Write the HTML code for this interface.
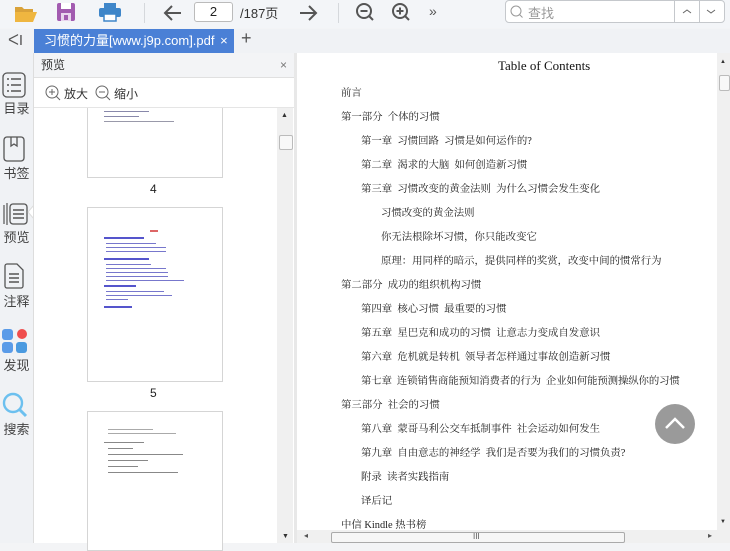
<!DOCTYPE html><html><head><meta charset="utf-8"><style>
*{margin:0;padding:0;box-sizing:border-box}
body{width:730px;height:543px;overflow:hidden;background:#f3f4f6;font-family:"Liberation Sans","Noto Sans CJK SC",sans-serif;position:relative;color:#333}
.a{position:absolute}
.toc{position:absolute;font-family:"Liberation Serif","Noto Serif CJK SC",serif;font-size:10.4px;color:#222;white-space:pre}
.side{position:absolute;left:0;width:33px;text-align:center;font-size:12px;color:#444}
</style></head><body>
<div class="a" style="left:0;top:0;width:730px;height:28px;background:#f3f5f8"></div>
<svg class="a" style="left:12px;top:3px" width="26" height="20"><path d="M3 4h7l2 2h9v3H3z" fill="#d9a23a"/><path d="M3 9h22l-4 10H3z" fill="#efb640"/></svg>
<svg class="a" style="left:56px;top:2px" width="20" height="20"><rect x="1" y="1" width="18" height="18" rx="2" fill="#a25bb0"/><rect x="5" y="1" width="10" height="6" fill="#fff"/><rect x="5" y="11" width="10" height="8" fill="#e9d5ee"/><rect x="8" y="13" width="4" height="5" fill="#a25bb0"/></svg>
<svg class="a" style="left:98px;top:2px" width="24" height="20"><rect x="6" y="1" width="12" height="5" fill="#3f86c9"/><rect x="1" y="6" width="22" height="9" rx="2" fill="#3f86c9"/><rect x="6" y="12" width="12" height="7" fill="#fff" stroke="#3f86c9" stroke-width="1.5"/></svg>
<div class="a" style="left:144px;top:3px;width:1px;height:20px;background:#d5d8dc"></div>
<svg class="a" style="left:162px;top:3px" width="22" height="20"><path d="M19 10H4M10 3L3 10l7 7" stroke="#555" stroke-width="2" fill="none"/></svg>
<div class="a" style="left:194px;top:2px;width:39px;height:20px;border:1px solid #bbb;border-radius:3px;background:#fff;font-size:13px;text-align:center;line-height:18px;color:#222">2</div>
<div class="a" style="left:240px;top:3px;font-size:13px;color:#333">/187页</div>
<svg class="a" style="left:297px;top:3px" width="22" height="20"><path d="M3 10h15M12 3l7 7-7 7" stroke="#555" stroke-width="2" fill="none"/></svg>
<div class="a" style="left:338px;top:3px;width:1px;height:20px;background:#d5d8dc"></div>
<svg class="a" style="left:354px;top:1px" width="22" height="22"><circle cx="10" cy="10" r="7" stroke="#555" stroke-width="2" fill="none"/><path d="M6.5 10h7M15 15l4 4" stroke="#555" stroke-width="2"/></svg>
<svg class="a" style="left:390px;top:1px" width="22" height="22"><circle cx="10" cy="10" r="7" stroke="#555" stroke-width="2" fill="none"/><path d="M6.5 10h7M10 6.5v7M15 15l4 4" stroke="#555" stroke-width="2"/></svg>
<div class="a" style="left:429px;top:3px;font-size:14px;color:#555">»</div>
<div class="a" style="left:505px;top:0;width:220px;height:23px;border:1px solid #c5c8cc;border-radius:4px;background:#fff"></div>
<svg class="a" style="left:509px;top:4px" width="16" height="16"><circle cx="7" cy="7" r="5" stroke="#999" fill="none"/><path d="M10.5 10.5l3 3" stroke="#999"/></svg>
<div class="a" style="left:528px;top:3px;font-size:13px;color:#999">查找</div>
<div class="a" style="left:674px;top:0;width:1px;height:23px;background:#c5c8cc"></div>
<div class="a" style="left:699px;top:0;width:1px;height:23px;background:#c5c8cc"></div>
<svg class="a" style="left:680px;top:6px" width="40" height="10"><path d="M3 7l4-3 4 3M27 4l4 3 4-3" stroke="#666" fill="none"/></svg>
<div class="a" style="left:0;top:29px;width:730px;height:24px;background:#f0f2f5"></div>
<div class="a" style="left:8px;top:31px;font-size:15px;color:#555">ᐸI</div>
<div class="a" style="left:34px;top:29px;width:200px;height:24px;background:#4a80d6;color:#fff;font-size:13px;line-height:24px;padding-left:10px">习惯的力量[www.j9p.com].pdf <span style="margin-left:2px">×</span></div>
<div class="a" style="left:241px;top:28px;font-size:18px;color:#555">+</div>
<div class="a" style="left:0;top:53px;width:33px;height:490px;background:#f0f2f5"></div>
<svg class="a" style="left:2px;top:72px" width="24" height="26"><rect x="1" y="1" width="22" height="24" rx="4" stroke="#555" stroke-width="1.3" fill="none"/><path d="M5 7h2M9 7h10M5 13h2M9 13h10M5 19h2M9 19h10" stroke="#555" stroke-width="1.5"/></svg>
<div class="side" style="top:98px;font-size:13px">目录</div>
<svg class="a" style="left:3px;top:136px" width="22" height="26"><rect x="1" y="1" width="20" height="24" rx="3" stroke="#555" stroke-width="1.3" fill="none"/><path d="M8 1v9l3-2 3 2V1" stroke="#555" stroke-width="1.3" fill="none"/></svg>
<div class="side" style="top:163px;font-size:13px">书签</div>
<svg class="a" style="left:2px;top:200px" width="26" height="26"><path d="M2 24V5M5 25V3" stroke="#555" stroke-width="1.2"/><rect x="8" y="4" width="17" height="20" rx="3" stroke="#555" stroke-width="1.3" fill="none"/><path d="M11 10h11M11 14h11M11 18h11" stroke="#555" stroke-width="1.4"/></svg>
<div class="side" style="top:227px;font-size:13px">预览</div>
<svg class="a" style="left:27px;top:205px" width="8" height="14"><path d="M7 0L1 7l6 7" fill="#fff" stroke="#ddd"/></svg>
<svg class="a" style="left:3px;top:263px" width="22" height="26"><path d="M2 3a2 2 0 012-2h10l6 6v16a2 2 0 01-2 2H4a2 2 0 01-2-2z" stroke="#555" stroke-width="1.3" fill="none"/><path d="M6 11h10M6 15h10M6 19h10" stroke="#555" stroke-width="1.4"/></svg>
<div class="side" style="top:291px;font-size:13px">注释</div>
<svg class="a" style="left:2px;top:328px" width="26" height="26"><rect x="0" y="1" width="11" height="11" rx="3" fill="#5a9be8"/><circle cx="20" cy="6" r="5" fill="#ef4d4d"/><rect x="0" y="14" width="11" height="11" rx="3" fill="#5a9be8"/><rect x="14" y="14" width="11" height="11" rx="3" fill="#4a9ae0"/></svg>
<div class="side" style="top:355px;font-size:13px">发现</div>
<svg class="a" style="left:2px;top:392px" width="26" height="26"><circle cx="11" cy="11" r="9" stroke="#6cc0ef" stroke-width="2.4" fill="none"/><path d="M18 18l6 6" stroke="#6cc0ef" stroke-width="3"/></svg>
<div class="side" style="top:419px;font-size:13px">搜索</div>
<div class="a" style="left:33px;top:53px;width:262px;height:490px;background:#fff;border-left:1px solid #ddd"></div>
<div class="a" style="left:34px;top:53px;width:260px;height:25px;background:#f3f4f6;border-bottom:1px solid #e0e0e0;font-size:12px;line-height:25px;padding-left:7px;color:#333">预览<span style="position:absolute;right:7px;color:#777">×</span></div>
<svg class="a" style="left:45px;top:85px" width="16" height="16"><circle cx="7" cy="7" r="6" stroke="#666" fill="none"/><path d="M4 7h6M7 4v6M11 11l4 4" stroke="#666"/></svg>
<div class="a" style="left:64px;top:85px;font-size:12px;color:#333">放大</div>
<svg class="a" style="left:95px;top:85px" width="16" height="16"><circle cx="7" cy="7" r="6" stroke="#666" fill="none"/><path d="M4 7h6M11 11l4 4" stroke="#666"/></svg>
<div class="a" style="left:114px;top:85px;font-size:12px;color:#333">缩小</div>
<div class="a" style="left:34px;top:107px;width:260px;height:1px;background:#e5e5e5"></div>
<div class="a" style="left:87px;top:108px;width:136px;height:70px;border:1px solid #d5d5d5;border-top:none;background:#fff"></div>
<div class="a" style="left:104px;top:111px;width:45px;height:1px;background:#88a"></div>
<div class="a" style="left:104px;top:116px;width:35px;height:1px;background:#88a"></div>
<div class="a" style="left:104px;top:121px;width:70px;height:1px;background:#99a"></div>
<div class="a" style="left:150px;top:182px;font-size:12px;color:#222">4</div>
<div class="a" style="left:87px;top:207px;width:136px;height:175px;border:1px solid #d5d5d5;background:#fff"></div>
<div class="a" style="left:150px;top:230px;width:8px;height:2px;background:#d66"></div>
<div class="a" style="left:104px;top:237px;width:40px;height:2px;background:#55c"></div>
<div class="a" style="left:106px;top:243px;width:50px;height:1px;background:#77c"></div>
<div class="a" style="left:106px;top:247px;width:60px;height:1px;background:#77c"></div>
<div class="a" style="left:106px;top:251px;width:60px;height:1px;background:#77c"></div>
<div class="a" style="left:104px;top:258px;width:45px;height:2px;background:#55c"></div>
<div class="a" style="left:106px;top:264px;width:45px;height:1px;background:#77c"></div>
<div class="a" style="left:106px;top:268px;width:60px;height:1px;background:#77c"></div>
<div class="a" style="left:106px;top:272px;width:62px;height:1px;background:#77c"></div>
<div class="a" style="left:106px;top:276px;width:62px;height:1px;background:#77c"></div>
<div class="a" style="left:106px;top:280px;width:78px;height:1px;background:#77c"></div>
<div class="a" style="left:104px;top:285px;width:32px;height:2px;background:#55c"></div>
<div class="a" style="left:106px;top:291px;width:58px;height:1px;background:#77c"></div>
<div class="a" style="left:106px;top:295px;width:66px;height:1px;background:#77c"></div>
<div class="a" style="left:106px;top:299px;width:22px;height:1px;background:#77c"></div>
<div class="a" style="left:104px;top:306px;width:28px;height:2px;background:#55c"></div>
<div class="a" style="left:150px;top:386px;font-size:12px;color:#222">5</div>
<div class="a" style="left:87px;top:411px;width:136px;height:140px;border:1px solid #d5d5d5;background:#fff"></div>
<div class="a" style="left:108px;top:429px;width:45px;height:1px;background:#aaa"></div>
<div class="a" style="left:108px;top:433px;width:68px;height:1px;background:#aaa"></div>
<div class="a" style="left:104px;top:442px;width:40px;height:1px;background:#888"></div>
<div class="a" style="left:108px;top:448px;width:25px;height:1px;background:#888"></div>
<div class="a" style="left:108px;top:454px;width:75px;height:1px;background:#888"></div>
<div class="a" style="left:108px;top:460px;width:40px;height:1px;background:#888"></div>
<div class="a" style="left:108px;top:466px;width:30px;height:1px;background:#888"></div>
<div class="a" style="left:108px;top:472px;width:70px;height:1px;background:#888"></div>
<div class="a" style="left:277px;top:108px;width:16px;height:435px;background:#f0f0f0"></div>
<div class="a" style="left:279px;top:135px;width:14px;height:15px;border:1px solid #bbb;border-radius:2px;background:#f8f8f8"></div>
<div class="a" style="left:281px;top:112px;font-size:7px;color:#333">▲</div>
<div class="a" style="left:282px;top:533px;font-size:7px;color:#333">▼</div>
<div class="a" style="left:294px;top:53px;width:3px;height:490px;background:#e8e8e8"></div>
<div class="a" style="left:297px;top:53px;width:420px;height:477px;background:#fff"></div>
<div class="a" style="left:498px;top:58px;font-family:'Liberation Serif',serif;font-size:13px;color:#111">Table of Contents</div>
<div class="toc" style="left:341px;top:84px">前言</div>
<div class="toc" style="left:341px;top:108px">第一部分  个体的习惯</div>
<div class="toc" style="left:361px;top:132px">第一章  习惯回路  习惯是如何运作的?</div>
<div class="toc" style="left:361px;top:156px">第二章  渴求的大脑  如何创造新习惯</div>
<div class="toc" style="left:361px;top:180px">第三章  习惯改变的黄金法则  为什么习惯会发生变化</div>
<div class="toc" style="left:381px;top:204px">习惯改变的黄金法则</div>
<div class="toc" style="left:381px;top:228px">你无法根除坏习惯，你只能改变它</div>
<div class="toc" style="left:381px;top:252px">原理：用同样的暗示，提供同样的奖赏，改变中间的惯常行为</div>
<div class="toc" style="left:341px;top:276px">第二部分  成功的组织机构习惯</div>
<div class="toc" style="left:361px;top:300px">第四章  核心习惯  最重要的习惯</div>
<div class="toc" style="left:361px;top:324px">第五章  星巴克和成功的习惯  让意志力变成自发意识</div>
<div class="toc" style="left:361px;top:348px">第六章  危机就是转机  领导者怎样通过事故创造新习惯</div>
<div class="toc" style="left:361px;top:372px;letter-spacing:-0.1px">第七章  连锁销售商能预知消费者的行为  企业如何能预测操纵你的习惯</div>
<div class="toc" style="left:341px;top:396px">第三部分  社会的习惯</div>
<div class="toc" style="left:361px;top:420px">第八章  蒙哥马利公交车抵制事件  社会运动如何发生</div>
<div class="toc" style="left:361px;top:444px">第九章  自由意志的神经学  我们是否要为我们的习惯负责?</div>
<div class="toc" style="left:361px;top:468px">附录  读者实践指南</div>
<div class="toc" style="left:361px;top:492px">译后记</div>
<div class="toc" style="left:341px;top:516px">中信 Kindle 热书榜</div>
<div class="a" style="left:655px;top:404px;width:40px;height:40px;border-radius:50%;background:#9a9a9a"></div>
<svg class="a" style="left:663px;top:415px" width="24" height="16"><path d="M3 13l9-9 9 9" stroke="#fff" stroke-width="2.5" fill="none"/></svg>
<div class="a" style="left:717px;top:53px;width:13px;height:490px;background:#f0f0f0"></div>
<div class="a" style="left:719px;top:75px;width:11px;height:16px;border:1px solid #bbb;border-radius:2px;background:#f8f8f8"></div>
<div class="a" style="left:720px;top:59px;font-size:6px;color:#333">▲</div>
<div class="a" style="left:720px;top:519px;font-size:6px;color:#333">▼</div>
<div class="a" style="left:297px;top:530px;width:420px;height:13px;background:#f0f0f0"></div>
<div class="a" style="left:331px;top:532px;width:294px;height:11px;border:1px solid #aaa;border-radius:2px;background:#f6f6f6"></div>
<div class="a" style="left:473px;top:532px;font-size:8px;color:#555">III</div>
<div class="a" style="left:304px;top:531px;font-size:8px;color:#555">◂</div>
<div class="a" style="left:708px;top:531px;font-size:8px;color:#555">▸</div>
</body></html>
